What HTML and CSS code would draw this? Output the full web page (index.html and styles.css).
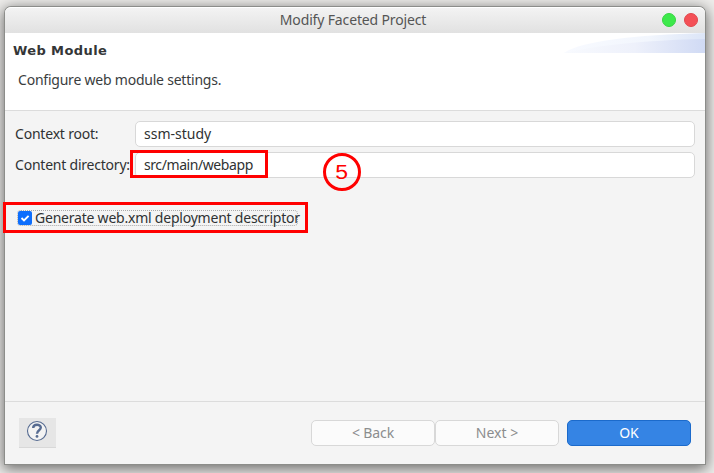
FILE: index.html
```html
<!DOCTYPE html>
<html lang="en">
<head>
<meta charset="utf-8">
<title>Modify Faceted Project</title>
<link rel="stylesheet" href="styles.css">
</head>
<body>
<main class="window">
  <header class="titlebar">
    <span class="caption">Modify Faceted Project</span>
    <div class="controls"><i class="dot green"></i><i class="dot red"></i></div>
  </header>
  <section class="banner">
    <h1>Web Module</h1>
    <p><span class="t-desc">Configure web module settings.</span></p>
    <svg class="swoosh" width="142" height="20" viewBox="0 0 142 20">
      <defs>
        <linearGradient id="a"><stop offset="0" stop-color="#f8faff"/><stop offset=".6" stop-color="#f2f6fd"/><stop offset="1" stop-color="#dce5f7"/></linearGradient>
        <linearGradient id="b"><stop offset="0" stop-color="#f8fafe"/><stop offset=".5" stop-color="#eef1fb"/><stop offset="1" stop-color="#d0daf4"/></linearGradient>
      </defs>
      <path d="M1 20C18 8 72 2 142 0V20Z" fill="url(#a)"/>
      <path d="M1 20C30 13 82 7 142 6V20Z" fill="url(#b)"/>
    </svg>
  </section>
  <section class="content">
    <div class="row"><label><span class="t-root">Context root:</span></label><div class="field"><span class="t-study">ssm-study</span></div></div>
    <div class="row"><label><span class="t-dir">Content directory:</span></label><div class="field"><span class="t-path">src/main/webapp</span></div></div>
    <div class="check">
      <svg width="14" height="14" viewBox="0 0 14 14"><rect width="14" height="14" rx="2" fill="#0d6efd"/><path d="M3.5 7L6 9.4L10.6 4.8" fill="none" stroke="#fff" stroke-width="1.9"/></svg>
      <span class="t-check">Generate web.xml deployment descriptor</span>
    </div>
  </section>
  <footer>
    <div class="help">
      <svg width="22" height="22" viewBox="0 0 22 22" fill="none" stroke="#566b91"><circle cx="11" cy="11" r="9.5" fill="#f3f3f3" stroke-width="1.1"/><path d="M7.2 8C7.2 3.7 14.8 3.7 14.8 7.6C14.8 10.2 11 10.3 11 13.7" stroke-width="2.4"/><circle cx="11" cy="16.4" r="1.4" fill="#566b91" stroke="none"/></svg>
    </div>
    <div class="buttons">
      <div class="btn"><span class="t-back">&lt; Back</span></div>
      <div class="btn"><span class="t-next">Next &gt;</span></div>
      <div class="btn ok"><span class="t-ok">OK</span></div>
    </div>
  </footer>
</main>
<div class="mark mark-path"></div>
<div class="mark mark-check"></div>
<div class="step"><span>5</span></div>
</body>
</html>
```
FILE: styles.css
```css
* { box-sizing: border-box; }
body {
  margin: 0;
  width: 714px;
  height: 473px;
  padding: 7px 9px 9px 5px;
  overflow: hidden;
  background: #eeedeb;
  font: 14px/20px "Noto Sans", sans-serif;
  color: #3a3d3e;
}
span { white-space: nowrap; }
.caption { letter-spacing: -.15px; }
.t-desc { letter-spacing: -.22px; }
.t-root { letter-spacing: -.2px; }
.t-dir { letter-spacing: -.22px; }
.t-path { letter-spacing: -.42px; }
.t-check { letter-spacing: -.22px; }
.t-back { letter-spacing: -.1px; }
.window {
  display: flex;
  flex-direction: column;
  width: 700px;
  height: 457px;
  border-radius: 6px 6px 0 0;
  background: #f4f4f4;
  box-shadow: 0 0 0 1px #8c8d8a, 0 3px 14px 2px rgba(0, 0, 0, .55);
}
.titlebar {
  position: relative;
  display: flex;
  justify-content: center;
  height: 26px;
  padding-top: 2px;
  padding-right: 4px;
  border-top: 1px solid #fff;
  border-radius: 6px 6px 0 0;
  background: linear-gradient(#f3f3f3, #e1e1e1);
  color: #555;
}
.controls { position: absolute; right: 7px; top: 5px; display: flex; gap: 8px; }
.dot { width: 14px; height: 14px; border-radius: 50%; }
.green { background: #3de94b; border: 1px solid #37d443; }
.red { background: #f45056; border: 1px solid #e1474c; }
.banner {
  position: relative;
  height: 78px;
  padding: 8px 8px 0;
  background: #fff;
  border-bottom: 1px solid #dcdcdc;
}
h1 { margin: 0; font: bold 13px/20px "DejaVu Sans", sans-serif; letter-spacing: .4px; color: #343637; }
p { margin: 9px 0 0 5px; }
.swoosh { position: absolute; top: 0; right: 0; }
.content { flex: 1; padding: 10px 10px 0; color: #2f3233; }
.row { display: flex; align-items: center; height: 26px; margin-bottom: 5px; }
.row label { width: 120px; }
.field {
  flex: 1;
  height: 26px;
  padding: 2px 8px;
  border: 1px solid #d8d8d8;
  border-radius: 5px;
  background: #fff;
}
.check {
  display: flex;
  align-items: center;
  gap: 3px;
  width: 281px;
  height: 16px;
  margin: 32px 0 0 2px;
  border: 1px dotted #aaa;
  border-radius: 4px;
}
.check svg { flex: none; }
footer {
  display: flex;
  justify-content: space-between;
  height: 63px;
  padding: 16px 14px 0;
  border-top: 1px solid #dcdcdc;
}
.help { width: 37px; height: 30px; padding: 2px 7px; background: #e6e6e6; border-bottom: 1px solid #d8d8d8; }
.help svg { display: block; }
.buttons { display: flex; padding-top: 2px; }
.btn {
  display: flex;
  justify-content: center;
  width: 124px;
  height: 26px;
  padding-top: 2px;
  border: 1px solid #d8d8d8;
  border-radius: 5px;
  background: #fbfbfb;
  color: #8b8d8e;
}
.ok { margin-left: 8px; background: #3584e4; border-color: #1b6acb; color: #fff; }
.mark { position: absolute; border: 3px solid #f00; }
.mark-path { left: 130px; top: 150px; width: 138px; height: 28px; }
.mark-check { left: 3px; top: 202px; width: 305px; height: 31px; }
.step {
  position: absolute;
  left: 323px;
  top: 153px;
  width: 38px;
  height: 38px;
  border: 3px solid #f00;
  border-radius: 50%;
  font: 20px/32px "Liberation Sans", sans-serif;
  text-align: center;
  color: #f00;
}
.step span { display: inline-block; transform: scaleX(1.15); }
```
